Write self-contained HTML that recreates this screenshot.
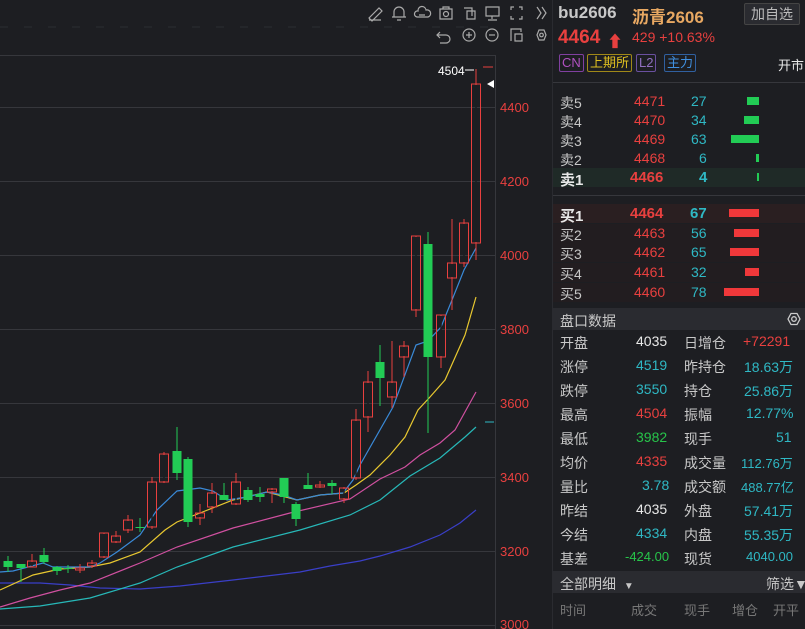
<!DOCTYPE html>
<html><head><meta charset="utf-8"><style>
*{margin:0;padding:0;box-sizing:border-box}
body{width:805px;height:629px;background:#1d1e22;font-family:"Liberation Sans","Noto Sans CJK SC",sans-serif;position:relative;overflow:hidden;color:#ddd}
.a{position:absolute;white-space:nowrap}
.r{color:#e8403f}.c{color:#2fb8c4}.g{color:#27c44a}.w{color:#e8e8e8}.l{color:#c8c8c8}
.ob{position:absolute;left:553px;width:252px;height:19px;font-size:14px}
.ob span{position:absolute;top:1px}
.dr{position:absolute;left:553px;width:252px;font-size:14px;height:24px}
.dr span{position:absolute;top:3px}
.tag{position:absolute;top:54px;height:18px;font-size:13px;line-height:16px;border:1px solid;border-radius:2px;padding:0 2px}
</style></head><body>
<svg class="a" style="left:0;top:0" width="553" height="629">
<line x1="0" y1="27" x2="495" y2="27" stroke="#2c2d32" stroke-dasharray="8 16"/>
<g stroke="#36373c" stroke-width="1">
<line x1="0" y1="55.5" x2="495" y2="55.5"/>
<line x1="0" y1="107.5" x2="495" y2="107.5"/><line x1="0" y1="181.5" x2="495" y2="181.5"/>
<line x1="0" y1="255.5" x2="495" y2="255.5"/><line x1="0" y1="329.5" x2="495" y2="329.5"/>
<line x1="0" y1="403.5" x2="495" y2="403.5"/><line x1="0" y1="477.5" x2="495" y2="477.5"/>
<line x1="0" y1="551.5" x2="495" y2="551.5"/><line x1="0" y1="625.5" x2="495" y2="625.5"/>
<line x1="495.5" y1="55" x2="495.5" y2="629"/>
<line x1="552.5" y1="0" x2="552.5" y2="629" stroke="#2a2b30"/>
</g>
<g fill="none" stroke="#aaa" stroke-width="1.2">
<path d="M369 18 L379 8 L382 11 L372 21 Z M369 20 H381"/>
<path d="M394 17 V12 A5 5 0 0 1 404 12 V17 Z M392 17 H406 M397 20 H401"/>
<path d="M417 17 A3 3 0 0 1 418 11 A4 4 0 0 1 426 10 A3.5 3.5 0 0 1 428 17 Z M419 15 H425"/>
<path d="M440 9 H452 V19 H440 Z M443 9 V7 H449 V9"/><circle cx="446" cy="14" r="2.5"/>
<path d="M464 8 H472 V16 M467 11 H475 V19 H467 Z"/>
<path d="M486 7 H499 V16 H486 Z M492 16 V19 M488 20 H497"/>
<path d="M511 10 V7 H514 M519 7 H522 V10 M522 16 V19 H519 M514 19 H511 V16"/>
<path d="M537 7 L541 13 L537 19 M542 7 L546 13 L542 19"/>
<path d="M440 32 L437 35 L440 38 M437 35 H446 A4 4 0 0 1 446 43 H440"/>
<circle cx="469" cy="35" r="6"/><path d="M466 35 H472 M469 32 V38"/>
<circle cx="492" cy="35" r="6"/><path d="M489 35 H495"/>
<path d="M511 41 V29 H521 V32 M515 34 H522 V41 H515 Z"/>
<path d="M537 35 L539 30 H544 L546 35 L544 40 H539 Z"/><circle cx="541.5" cy="35" r="1.8"/>
</g>
<g font-size="13" fill="#e8403f" font-family="Liberation Sans">
<text x="500" y="112">4400</text><text x="500" y="186">4200</text><text x="500" y="260">4000</text>
<text x="500" y="334">3800</text><text x="500" y="408">3600</text><text x="500" y="482">3400</text>
<text x="500" y="556">3200</text><text x="500" y="629">3000</text></g>
<line x1="485" y1="422" x2="494" y2="422" stroke="#2fb8c4"/>
<polygon points="487,84 494,80 494,88" fill="#fff"/>
<text x="438" y="75" font-size="12" fill="#fff">4504</text>
<line x1="465" y1="70" x2="474" y2="70" stroke="#fff"/>
<line x1="483" y1="67" x2="493" y2="67" stroke="#e8403f"/>
<g fill="none" stroke-width="1.2">
<polyline stroke="#3a3fc8" points="0,583 40,583 70,585 100,588 140,589 180,586 233,580 300,572 330,566 360,561 380,556 410,547 440,535 460,523 476,510"/>
<polyline stroke="#27b8b8" points="0,609 40,606 90,598 140,583 177,567 233,547 300,530 350,515 380,500 410,476 440,458 465,437 476,427"/>
<polyline stroke="#d050a0" points="0,607 30,598 60,590 90,583 140,563 177,547 233,528 290,513 350,499 380,479 405,467 420,455 440,443 455,430 476,392"/>
<polyline stroke="#e8c830" points="0,590 33,575 60,569 90,567 110,563 140,552 165,530 177,522 200,513 233,500 267,492 297,500 320,495 344,493 356,485 370,475 390,455 405,437 418,410 430,397 445,380 465,335 476,297"/>
<polyline stroke="#3a8ad8" points="0,572 13,571 43,563 53,567 90,567 100,563 117,552 140,535 157,510 177,491 200,488 213,491 227,500 247,497 267,492 283,495 297,500 320,495 343,493 353,480 360,465 393,407 416,345 428,341 441,327 452,300 464,270 476,248"/>
</g>
<g id="cd"></g>
</svg>
<script>
var d=[
[8,'g',561,567,556,572],[21,'g',564,568,564,582],[32,'r',561,567,554,567],[44,'g',555,562,548,564],[57,'g',567,571,566,575],[68,'g',568,569,565,573],[80,'r',568,570,564,573],[92,'r',563,566,560,568],[104,'r',533,557,533,558],[116,'r',536,542,531,543],[128,'r',520,530,515,533],[140,'g',527,528,518,532],[152,'r',482,527,477,529],[164,'r',454,482,452,483],[177,'g',451,473,427,480],[188,'g',459,522,457,527],[200,'r',513,518,504,525],[212,'r',493,507,483,513],[224,'g',495,500,483,500],[236,'r',482,504,473,505],[248,'g',490,500,487,502],[260,'g',494,497,487,502],[272,'r',489,492,488,503],[284,'g',478,497,478,503],[296,'g',504,519,502,526],[308,'g',485,489,473,489],[320,'r',485,487,481,488],[332,'g',483,486,480,494],[344,'r',488,499,487,503],[356,'r',420,478,409,480],[368,'r',382,417,371,432],[380,'g',362,378,345,406],[392,'r',382,397,341,408],[404,'r',346,357,341,377],[416,'r',236,310,236,317],[428,'g',244,357,232,433],[441,'r',315,357,315,368],[452,'r',263,278,219,310],[464,'r',223,263,219,267],[476,'r',84,243,69,260]];
var s='';d.forEach(function(c){var col=c[1]=='r'?'#e8403f':'#22cc55';var h=Math.max(1,c[3]-c[2]);
s+='<line x1="'+c[0]+'" y1="'+c[4]+'" x2="'+c[0]+'" y2="'+c[5]+'" stroke="'+col+'"/>';
if(c[1]=='r'){if(h>2)s+='<line x1="'+c[0]+'" y1="'+(c[2]+1)+'" x2="'+c[0]+'" y2="'+(c[3]-1)+'" stroke="#1d1e22" stroke-width="1.5"/>';s+='<rect x="'+(c[0]-4.5)+'" y="'+c[2]+'" width="9" height="'+h+'" fill="none" stroke="'+col+'"/>';}
else s+='<rect x="'+(c[0]-4.5)+'" y="'+c[2]+'" width="9" height="'+h+'" fill="'+col+'"/>';});
document.getElementById('cd').innerHTML=s;
</script>

<div class="a" style="left:558px;top:3px;font-size:17px;font-weight:bold;color:#c8c8c8">bu2606</div>
<div class="a" style="left:632px;top:3px;font-size:17px;font-weight:bold;color:#e8a862">沥青2606</div>
<div class="a" style="left:744px;top:3px;width:56px;height:22px;border:1px solid #444;background:#2a2b30;border-radius:2px;color:#bbb;font-size:14px;text-align:center;line-height:20px">加自选</div>
<div class="a r" style="left:558px;top:27px;font-size:19px;font-weight:bold">4464</div>
<div class="a r" style="left:607px;top:28px;font-size:16px">⬆</div>
<div class="a r" style="left:632px;top:29px;font-size:14px">429 +10.63%</div>
<div class="tag" style="left:559px;color:#b050c0;border-color:#8040a0">CN</div>
<div class="tag" style="left:587px;color:#e0c020;border-color:#a08818">上期所</div>
<div class="tag" style="left:636px;color:#9070c0;border-color:#6a50a0">L2</div>
<div class="tag" style="left:664px;color:#4090e0;border-color:#3060a0">主力</div>
<div class="a w" style="left:778px;top:55px;font-size:13px">开市</div>
<div class="a" style="left:553px;top:82px;width:252px;height:1px;background:#36373c"></div>

<div class="ob" style="top:92px"><span class="l" style="left:7px">卖5</span><span class="r" style="left:81px">4471</span><span class="c" style="left:138px">27</span><span style="left:194px;top:5px;width:12px;height:8px;background:#22cc55"></span></div>
<div class="ob" style="top:111px"><span class="l" style="left:7px">卖4</span><span class="r" style="left:81px">4470</span><span class="c" style="left:138px">34</span><span style="left:191px;top:5px;width:15px;height:8px;background:#22cc55"></span></div>
<div class="ob" style="top:130px"><span class="l" style="left:7px">卖3</span><span class="r" style="left:81px">4469</span><span class="c" style="left:138px">63</span><span style="left:178px;top:5px;width:28px;height:8px;background:#22cc55"></span></div>
<div class="ob" style="top:149px"><span class="l" style="left:7px">卖2</span><span class="r" style="left:81px">4468</span><span class="c" style="left:146px">6</span><span style="left:203px;top:5px;width:3px;height:8px;background:#22cc55"></span></div>
<div class="ob" style="top:168px;background:#1f2a27;font-weight:bold;font-size:15px"><span class="w" style="left:7px">卖1</span><span class="r" style="left:77px">4466</span><span class="c" style="left:146px">4</span><span style="left:204px;top:5px;width:2px;height:8px;background:#22cc55"></span></div>
<div class="a" style="left:553px;top:195px;width:252px;height:1px;background:#36373c"></div>
<div class="ob" style="top:204px;background:#2a1f21;font-weight:bold;font-size:15px"><span class="w" style="left:7px">买1</span><span class="r" style="left:77px">4464</span><span class="c" style="left:137px">67</span><span style="left:176px;top:5px;width:30px;height:8px;background:#f0383a"></span></div>
<div class="ob" style="top:224px;background:#221d20"><span class="l" style="left:7px">买2</span><span class="r" style="left:81px">4463</span><span class="c" style="left:138px">56</span><span style="left:181px;top:5px;width:25px;height:8px;background:#f0383a"></span></div>
<div class="ob" style="top:243px;background:#221d20"><span class="l" style="left:7px">买3</span><span class="r" style="left:81px">4462</span><span class="c" style="left:138px">65</span><span style="left:177px;top:5px;width:29px;height:8px;background:#f0383a"></span></div>
<div class="ob" style="top:263px;background:#221d20"><span class="l" style="left:7px">买4</span><span class="r" style="left:81px">4461</span><span class="c" style="left:138px">32</span><span style="left:192px;top:5px;width:14px;height:8px;background:#f0383a"></span></div>
<div class="ob" style="top:283px;background:#221d20"><span class="l" style="left:7px">买5</span><span class="r" style="left:81px">4460</span><span class="c" style="left:138px">78</span><span style="left:171px;top:5px;width:35px;height:8px;background:#f0383a"></span></div>

<div class="a" style="left:553px;top:308px;width:252px;height:22px;background:#2a2b30"></div>
<div class="a l" style="left:560px;top:311px;font-size:14px">盘口数据</div>
<svg class="a" style="left:786px;top:311px" width="16" height="16"><path d="M2 8 L5 2.5 H11 L14 8 L11 13.5 H5 Z" fill="none" stroke="#ccc" stroke-width="1.3"/><circle cx="8" cy="8" r="2.3" fill="none" stroke="#ccc" stroke-width="1.3"/></svg>

<div class="dr" style="top:330px"><span class="l" style="left:7px">开盘</span><span class="w" style="left:83px">4035</span><span class="l" style="left:131px">日增仓</span><span class="r" style="left:190px">+72291</span></div>
<div class="dr" style="top:354px"><span class="l" style="left:7px">涨停</span><span class="c" style="left:83px">4519</span><span class="l" style="left:131px">昨持仓</span><span class="c" style="left:191px">18.63万</span></div>
<div class="dr" style="top:378px"><span class="l" style="left:7px">跌停</span><span class="c" style="left:83px">3550</span><span class="l" style="left:131px">持仓</span><span class="c" style="left:191px">25.86万</span></div>
<div class="dr" style="top:402px"><span class="l" style="left:7px">最高</span><span class="r" style="left:83px">4504</span><span class="l" style="left:131px">振幅</span><span class="c" style="left:193px">12.77%</span></div>
<div class="dr" style="top:426px"><span class="l" style="left:7px">最低</span><span class="g" style="left:83px">3982</span><span class="l" style="left:131px">现手</span><span class="c" style="left:223px">51</span></div>
<div class="dr" style="top:450px"><span class="l" style="left:7px">均价</span><span class="r" style="left:83px">4335</span><span class="l" style="left:131px">成交量</span><span class="c" style="left:188px;font-size:13px">112.76万</span></div>
<div class="dr" style="top:474px"><span class="l" style="left:7px">量比</span><span class="c" style="left:89px">3.78</span><span class="l" style="left:131px">成交额</span><span class="c" style="left:188px;font-size:13px">488.77亿</span></div>
<div class="dr" style="top:498px"><span class="l" style="left:7px">昨结</span><span class="w" style="left:83px">4035</span><span class="l" style="left:131px">外盘</span><span class="c" style="left:191px">57.41万</span></div>
<div class="dr" style="top:522px"><span class="l" style="left:7px">今结</span><span class="c" style="left:83px">4334</span><span class="l" style="left:131px">内盘</span><span class="c" style="left:191px">55.35万</span></div>
<div class="dr" style="top:546px"><span class="l" style="left:7px">基差</span><span class="g" style="left:72px;font-size:13px">-424.00</span><span class="l" style="left:131px">现货</span><span class="c" style="left:193px;font-size:13px">4040.00</span></div>

<div class="a" style="left:553px;top:571px;width:252px;height:22px;background:#2a2b30"></div>
<div class="a l" style="left:560px;top:574px;font-size:14px">全部明细 <span style="font-size:10px;margin-left:4px">▼</span></div>
<div class="a l" style="left:766px;top:574px;font-size:14px">筛选<b>▼</b></div>
<div class="a" style="left:560px;top:600px;font-size:13px;color:#777">时间</div>
<div class="a" style="left:631px;top:600px;font-size:13px;color:#777">成交</div>
<div class="a" style="left:684px;top:600px;font-size:13px;color:#777">现手</div>
<div class="a" style="left:732px;top:600px;font-size:13px;color:#777">增仓</div>
<div class="a" style="left:773px;top:600px;font-size:13px;color:#777">开平</div>
</body></html>
